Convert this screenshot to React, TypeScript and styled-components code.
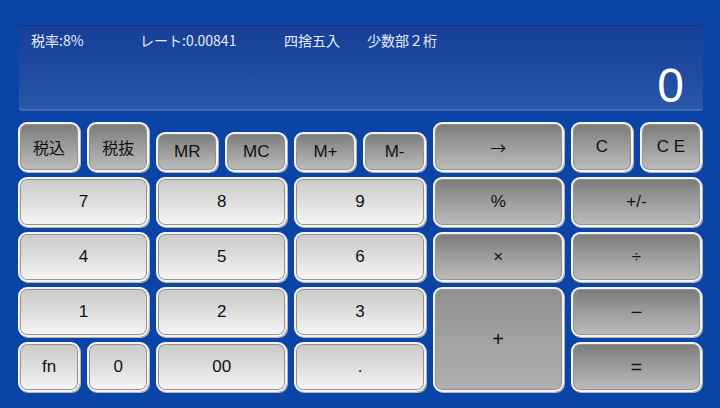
import React from "react";
import styled, { createGlobalStyle, css } from "styled-components";

const Global = createGlobalStyle`
  html, body { margin: 0; padding: 0; }
  body {
    background: #0a44a7;
    font-family: "Liberation Sans", "Noto Sans CJK JP", Arial, sans-serif;
    width: 720px;
    height: 408px;
    overflow: hidden;
  }
`;

const Page = styled.div`
  width: 720px;
  height: 408px;
  box-sizing: border-box;
  padding: 25px 17px 0 18px;
  display: flex;
  flex-direction: column;
  gap: 11px;
`;

const Display = styled.div`
  margin-left: 1px;
  height: 86px;
  border-radius: 4px;
  background: linear-gradient(180deg, #173f98 0%, #1f4aa0 55%, #2a58aa 100%);
  box-shadow: inset 0 1px 0 rgba(0, 0, 0, 0.18), inset 0 -2px 0 rgba(120, 150, 200, 0.35);
  box-sizing: border-box;
  padding: 6px 19px 0 12px;
  display: flex;
  flex-direction: column;
`;

const InfoRow = styled.div`
  display: flex;
  font-family: "Noto Sans CJK JP", "Liberation Sans", sans-serif;
  font-size: 14px;
  line-height: 19px;
  color: #e6ecf7;
`;

const Info = styled.span<{ $w?: number }>`
  width: ${(p) => (p.$w ? `${p.$w}px` : "auto")};
  flex: none;
  white-space: nowrap;
`;

const Value = styled.div`
  text-align: right;
  font-family: "Liberation Sans", Arial, sans-serif;
  font-size: 48px;
  line-height: 48px;
  color: #ffffff;
  margin-top: 12px;
`;

const Pad = styled.div`
  display: grid;
  grid-template-columns: repeat(10, 1fr);
  grid-template-rows: repeat(5, 50px);
  column-gap: 7px;
  row-gap: 5px;
  width: 684px;
`;

type Tone = "dark" | "light" | "flat";

const Key = styled.button<{
  $tone: Tone;
  $c: string;
  $r?: string;
  $short?: boolean;
  $size?: number;
}>`
  grid-column: ${(p) => p.$c};
  grid-row: ${(p) => p.$r ?? "auto"};
  ${(p) =>
    p.$short &&
    css`
      align-self: end;
      height: 40px;
    `}
  box-sizing: border-box;
  margin: 0;
  padding: 0;
  border: 2px solid #f3f3f1;
  border-radius: 9px;
  box-shadow: 1px 1px 0 #bdb6a6, inset 0 0 0 1px #939393;
  color: #111;
  font-family: "Liberation Sans", "Noto Sans CJK JP", Arial, sans-serif;
  font-size: ${(p) => p.$size ?? 17}px;
  display: flex;
  align-items: center;
  justify-content: center;
  background: ${(p) =>
    p.$tone === "dark"
      ? "linear-gradient(180deg, #7a7a7a 0%, #9a9a9a 45%, #bcbcbc 100%)"
      : p.$tone === "flat"
      ? "linear-gradient(180deg, #8f8f8f 0%, #a2a2a2 50%, #b0b0b0 100%)"
      : "linear-gradient(180deg, #cacaca 0%, #dedede 50%, #f6f6f6 100%)"};
`;

const Kanji = styled.span`
  font-family: "Noto Sans CJK JP", sans-serif;
  font-size: 16px;
`;

export default function App() {
  return (
    <>
      <Global />
      <Page>
        <Display>
          <InfoRow>
            <Info $w={109}>税率:8%</Info>
            <Info $w={144}>レート:0.00841</Info>
            <Info $w={83}>四捨五入</Info>
            <Info>少数部２桁</Info>
          </InfoRow>
          <Value>0</Value>
        </Display>
        <Pad>
          <Key $tone="dark" $c="1"><Kanji>税込</Kanji></Key>
          <Key $tone="dark" $c="2"><Kanji>税抜</Kanji></Key>
          <Key $tone="dark" $c="3" $short>MR</Key>
          <Key $tone="dark" $c="4" $short>MC</Key>
          <Key $tone="dark" $c="5" $short>M+</Key>
          <Key $tone="dark" $c="6" $short>M-</Key>
          <Key $tone="dark" $c="7 / span 2"><Kanji>→</Kanji></Key>
          <Key $tone="dark" $c="9">C</Key>
          <Key $tone="dark" $c="10">C E</Key>

          <Key $tone="light" $c="1 / span 2">7</Key>
          <Key $tone="light" $c="3 / span 2">8</Key>
          <Key $tone="light" $c="5 / span 2">9</Key>
          <Key $tone="dark" $c="7 / span 2">%</Key>
          <Key $tone="dark" $c="9 / span 2">+/-</Key>

          <Key $tone="light" $c="1 / span 2">4</Key>
          <Key $tone="light" $c="3 / span 2">5</Key>
          <Key $tone="light" $c="5 / span 2">6</Key>
          <Key $tone="dark" $c="7 / span 2">×</Key>
          <Key $tone="dark" $c="9 / span 2">÷</Key>

          <Key $tone="light" $c="1 / span 2">1</Key>
          <Key $tone="light" $c="3 / span 2">2</Key>
          <Key $tone="light" $c="5 / span 2">3</Key>
          <Key $tone="flat" $c="7 / span 2" $r="4 / span 2" $size={20}>+</Key>
          <Key $tone="dark" $c="9 / span 2" $size={20}>−</Key>

          <Key $tone="light" $c="1">fn</Key>
          <Key $tone="light" $c="2">0</Key>
          <Key $tone="light" $c="3 / span 2">00</Key>
          <Key $tone="light" $c="5 / span 2">.</Key>
          <Key $tone="dark" $c="9 / span 2" $size={20}>=</Key>
        </Pad>
      </Page>
    </>
  );
}
